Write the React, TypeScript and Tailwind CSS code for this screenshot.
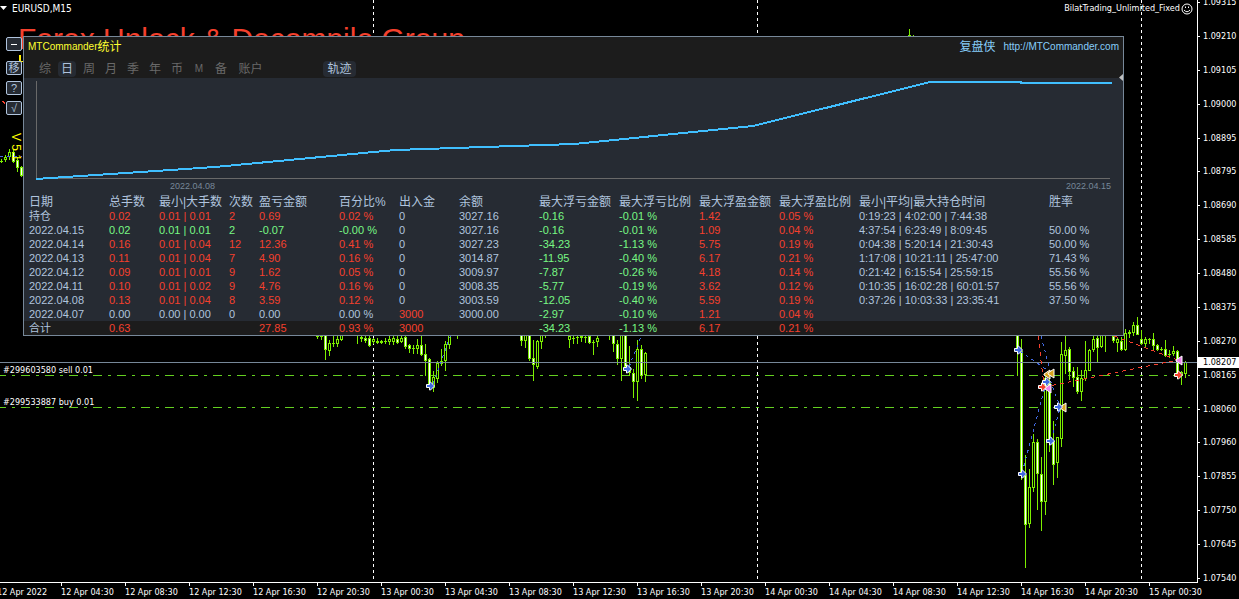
import React, { useState } from 'react';

type Vela = [x: number, high: number, low: number, top: number, bottom: number, dir: 'u' | 'd'];
type Tone = 'red' | 'green' | 'plain';

interface StatRow {
    date: string;
    tone: Tone;
    lots: string;
    range: string;
    count: string;
    profit: string;
    percent: string;
    deposit: string;
    balance: string;
    lossAmount: string;
    lossRatio: string;
    gainAmount: string;
    gainRatio: string;
    duration: string;
    winRate: string;
}

const toneClass: Record<Tone, string> = {
    red: 'text-[#f5402d]',
    green: 'text-[#78f884]',
    plain: 'text-[#b0c4de]',
};

const candles: Vela[] = [
    [1, 159, 163, 161, 162, 'u'], [5, 155, 162, 157, 160, 'u'], [9, 149, 160, 152, 157, 'u'],
    [13, 150, 163, 152, 162, 'd'], [17, 157, 172, 160, 168, 'd'], [21, 166, 177, 167, 176, 'd'],
    [317, 336, 339, 336, 337, 'u'], [321, 336, 340, 336, 337, 'u'], [325, 336, 360, 330, 350, 'd'],
    [329, 340, 356, 343, 351, 'u'], [333, 336, 347, 343, 344, 'u'], [337, 336, 347, 339, 344, 'u'],
    [341, 336, 341, 330, 340, 'u'], [357, 336, 344, 335, 336, 'u'], [361, 336, 342, 337, 339, 'u'],
    [365, 336, 343, 338, 341, 'd'], [369, 336, 347, 338, 346, 'd'], [373, 338, 344, 339, 342, 'u'],
    [377, 338, 344, 341, 343, 'u'], [381, 340, 344, 341, 343, 'u'], [385, 338, 344, 341, 342, 'u'],
    [389, 336, 345, 339, 342, 'u'], [393, 336, 345, 338, 342, 'u'], [397, 336, 344, 339, 343, 'd'],
    [401, 336, 343, 338, 342, 'u'], [405, 336, 349, 337, 347, 'd'], [409, 344, 353, 345, 349, 'd'],
    [413, 345, 354, 348, 349, 'u'], [417, 339, 354, 345, 349, 'u'], [421, 336, 356, 345, 355, 'd'],
    [425, 344, 376, 354, 361, 'd'], [429, 358, 388, 359, 386, 'd'], [433, 371, 392, 377, 388, 'u'],
    [437, 361, 383, 363, 379, 'u'], [441, 349, 366, 361, 364, 'u'], [445, 341, 371, 344, 361, 'u'],
    [449, 336, 349, 330, 345, 'u'], [457, 336, 339, 335, 336, 'u'], [521, 336, 346, 330, 341, 'd'],
    [525, 336, 348, 330, 341, 'u'], [529, 336, 361, 330, 359, 'd'], [533, 340, 381, 358, 365, 'd'],
    [537, 340, 369, 341, 367, 'u'], [541, 336, 349, 330, 342, 'u'], [545, 335, 338, 335, 336, 'u'],
    [569, 336, 348, 336, 340, 'u'], [573, 336, 344, 338, 339, 'u'], [577, 336, 344, 337, 338, 'u'],
    [581, 336, 342, 336, 338, 'u'], [585, 336, 343, 337, 338, 'u'], [589, 336, 344, 336, 343, 'd'],
    [593, 340, 355, 342, 343, 'u'], [597, 336, 347, 338, 342, 'u'], [609, 336, 340, 335, 336, 'u'],
    [613, 336, 352, 330, 344, 'd'], [617, 340, 365, 344, 359, 'd'], [621, 336, 381, 330, 359, 'u'],
    [625, 336, 371, 330, 367, 'd'], [629, 346, 376, 367, 373, 'd'], [633, 369, 398, 373, 382, 'd'],
    [637, 340, 401, 349, 382, 'u'], [641, 345, 379, 349, 376, 'd'], [645, 352, 382, 353, 375, 'u'],
    [909, 29, 36, 35, 36, 'u'], [913, 35, 38, 36, 37, 'u'],
    [1017, 335, 376, 330, 351, 'd'], [1021, 339, 480, 351, 475, 'd'], [1025, 455, 568, 475, 525, 'd'],
    [1029, 469, 528, 487, 524, 'u'], [1033, 434, 492, 442, 488, 'u'], [1037, 439, 510, 442, 474, 'd'],
    [1041, 457, 531, 474, 502, 'd'], [1045, 373, 515, 378, 502, 'u'], [1049, 375, 452, 383, 442, 'd'],
    [1053, 421, 485, 441, 465, 'd'], [1057, 437, 478, 437, 463, 'u'], [1061, 342, 447, 354, 439, 'u'],
    [1065, 335, 374, 350, 356, 'u'], [1069, 347, 380, 349, 372, 'd'], [1073, 367, 387, 371, 378, 'd'],
    [1077, 367, 394, 377, 392, 'd'], [1081, 370, 401, 378, 392, 'u'], [1085, 341, 381, 370, 379, 'u'],
    [1089, 349, 371, 350, 371, 'u'], [1093, 335, 352, 339, 350, 'u'], [1097, 335, 362, 338, 348, 'd'],
    [1101, 335, 348, 330, 347, 'u'], [1105, 335, 352, 334, 336, 'u'], [1113, 335, 343, 336, 341, 'd'],
    [1117, 337, 352, 339, 343, 'u'], [1121, 337, 351, 341, 350, 'd'], [1125, 329, 351, 333, 350, 'u'],
    [1129, 330, 338, 332, 334, 'u'], [1133, 322, 336, 325, 333, 'u'], [1137, 317, 335, 325, 335, 'd'],
    [1141, 330, 345, 339, 344, 'd'], [1145, 337, 348, 339, 344, 'u'], [1149, 338, 344, 339, 340, 'u'],
    [1153, 333, 350, 339, 346, 'd'], [1157, 344, 351, 345, 350, 'd'], [1161, 347, 351, 349, 350, 'u'],
    [1165, 340, 357, 349, 356, 'd'], [1169, 350, 358, 354, 355, 'u'], [1173, 346, 356, 351, 354, 'u'],
    [1177, 350, 376, 351, 374, 'd'], [1181, 371, 385, 372, 376, 'u'], [1185, 361, 378, 362, 374, 'u'],
];

const blueTrades: [number, number, number, number][] = [
    [433, 384, 451, 334],
    [629, 367, 642, 334],
    [1020, 351, 1047, 370],
    [1041, 336, 1050, 370],
    [1022, 473, 1046, 383],
    [1048, 374, 1059, 404],
    [1051, 440, 1060, 408],
    [0, 156, 22, 157],
];

const redTrades: [number, number, number, number][] = [
    [1038, 336, 1044, 385],
    [1044, 387, 1178, 360],
    [1114, 336, 1178, 360],
    [2, 101, 6, 104],
];

const priceLevels = [
    '1.09315', '1.09210', '1.09105', '1.09000', '1.08895', '1.08795', '1.08690', '1.08585', '1.08480',
    '1.08375', '1.08270', '1.08165', '1.08060', '1.07960', '1.07855', '1.07750', '1.07645', '1.07540',
];

const timeLabels = [
    '12 Apr 2022', '12 Apr 04:30', '12 Apr 08:30', '12 Apr 12:30', '12 Apr 16:30', '12 Apr 20:30',
    '13 Apr 00:30', '13 Apr 04:30', '13 Apr 08:30', '13 Apr 12:30', '13 Apr 16:30', '13 Apr 20:30',
    '14 Apr 00:30', '14 Apr 04:30', '14 Apr 08:30', '14 Apr 12:30', '14 Apr 16:30', '14 Apr 20:30',
    '15 Apr 00:30',
];

const tabs = ['综', '日', '周', '月', '季', '年', '币', 'M', '备'];

const headers = [
    '日期', '总手数', '最小|大手数', '次数', '盈亏金额', '百分比%', '出入金', '余额', '最大浮亏金额',
    '最大浮亏比例', '最大浮盈金额', '最大浮盈比例', '最小|平均|最大持仓时间', '胜率',
];

const rows: StatRow[] = [
    { date: '持仓', tone: 'red', lots: '0.02', range: '0.01 | 0.01', count: '2', profit: '0.69', percent: '0.02 %', deposit: '0', balance: '3027.16', lossAmount: '-0.16', lossRatio: '-0.01 %', gainAmount: '1.42', gainRatio: '0.05 %', duration: '0:19:23 | 4:02:00 | 7:44:38', winRate: '' },
    { date: '2022.04.15', tone: 'green', lots: '0.02', range: '0.01 | 0.01', count: '2', profit: '-0.07', percent: '-0.00 %', deposit: '0', balance: '3027.16', lossAmount: '-0.16', lossRatio: '-0.01 %', gainAmount: '1.09', gainRatio: '0.04 %', duration: '4:37:54 | 6:23:49 | 8:09:45', winRate: '50.00 %' },
    { date: '2022.04.14', tone: 'red', lots: '0.16', range: '0.01 | 0.04', count: '12', profit: '12.36', percent: '0.41 %', deposit: '0', balance: '3027.23', lossAmount: '-34.23', lossRatio: '-1.13 %', gainAmount: '5.75', gainRatio: '0.19 %', duration: '0:04:38 | 5:20:14 | 21:30:43', winRate: '50.00 %' },
    { date: '2022.04.13', tone: 'red', lots: '0.11', range: '0.01 | 0.04', count: '7', profit: '4.90', percent: '0.16 %', deposit: '0', balance: '3014.87', lossAmount: '-11.95', lossRatio: '-0.40 %', gainAmount: '6.17', gainRatio: '0.21 %', duration: '1:17:08 | 10:21:11 | 25:47:00', winRate: '71.43 %' },
    { date: '2022.04.12', tone: 'red', lots: '0.09', range: '0.01 | 0.01', count: '9', profit: '1.62', percent: '0.05 %', deposit: '0', balance: '3009.97', lossAmount: '-7.87', lossRatio: '-0.26 %', gainAmount: '4.18', gainRatio: '0.14 %', duration: '0:21:42 | 6:15:54 | 25:59:15', winRate: '55.56 %' },
    { date: '2022.04.11', tone: 'red', lots: '0.10', range: '0.01 | 0.02', count: '9', profit: '4.76', percent: '0.16 %', deposit: '0', balance: '3008.35', lossAmount: '-5.77', lossRatio: '-0.19 %', gainAmount: '3.62', gainRatio: '0.12 %', duration: '0:10:35 | 16:02:28 | 60:01:57', winRate: '55.56 %' },
    { date: '2022.04.08', tone: 'red', lots: '0.13', range: '0.01 | 0.04', count: '8', profit: '3.59', percent: '0.12 %', deposit: '0', balance: '3003.59', lossAmount: '-12.05', lossRatio: '-0.40 %', gainAmount: '5.59', gainRatio: '0.19 %', duration: '0:37:26 | 10:03:33 | 23:35:41', winRate: '37.50 %' },
    { date: '2022.04.07', tone: 'plain', lots: '0.00', range: '0.00 | 0.00', count: '0', profit: '0.00', percent: '0.00 %', deposit: '3000', balance: '3000.00', lossAmount: '-2.97', lossRatio: '-0.10 %', gainAmount: '1.21', gainRatio: '0.04 %', duration: '', winRate: '' },
];

const total: StatRow = { date: '合计', tone: 'red', lots: '0.63', range: '', count: '', profit: '27.85', percent: '0.93 %', deposit: '3000', balance: '', lossAmount: '-34.23', lossRatio: '-1.13 %', gainAmount: '6.17', gainRatio: '0.21 %', duration: '', winRate: '' };

const Candle: React.FC<{ data: Vela }> = ({ data: [x, high, low, top, bottom, dir] }) => (
    <g>
        <rect x={x} y={high} width={1} height={low - high} fill="#7cee00" />
        <rect x={x - 1} y={top} width={3} height={bottom - top} fill="#7cee00" />
        {bottom - top > 2 && (
            <rect x={x} y={top + 1} width={1} height={bottom - top - 2} fill={dir === 'd' ? '#ffffff' : '#000000'} />
        )}
    </g>
);

const ArrowMark: React.FC<{ x: number; y: number; color: string }> = ({ x, y, color }) => (
    <path
        d={`M${x - 3.5} ${y - 1.5}h3v-2.500h1l4 4l-4 4h-1v-2.500h-3z`}
        fill={color}
        stroke="#ffffff"
        strokeWidth={1}
    />
);

const ExitMark: React.FC<{ x: number; y: number; color: string }> = ({ x, y, color }) => (
    <path d={`M${x - 3} ${y}l6 -4v9l-6 -4z`} fill={color} stroke="#ffffff" strokeWidth={1} />
);

const PriceChart: React.FC = () => (
    <svg className="block h-full w-full" aria-hidden="true">
        <g shapeRendering="crispEdges">
            {[373, 757, 1141].map(x => (
                <line key={x} x1={x + 0.5} x2={x + 0.5} y1={0} y2="100%" stroke="#ffffff" strokeDasharray="3 3" />
            ))}
            {[375, 407].map(y => (
                <line key={y} x1={-3} x2="99.4%" y1={y + 0.5} y2={y + 0.5} stroke="#64d020" strokeDasharray="9 6 3 6" />
            ))}
            {candles.map(c => <Candle key={c[0]} data={c} />)}
            <line x1={0} x2="100%" y1={362.5} y2={362.5} stroke="#778899" />
            {blueTrades.map(([x1, y1, x2, y2], i) => (
                <line key={i} x1={x1} y1={y1} x2={x2} y2={y2} stroke="#4169e1" strokeDasharray="3 4" />
            ))}
            {redTrades.map(([x1, y1, x2, y2], i) => (
                <line key={i} x1={x1} y1={y1} x2={x2} y2={y2} stroke="#f5402d" strokeDasharray="4 4" />
            ))}
        </g>

        <ArrowMark x={430} y={386} color="#4169e1" />
        <ArrowMark x={627} y={369} color="#4169e1" />
        <ArrowMark x={1018} y={350} color="#4169e1" />
        <ExitMark x={1047} y={374} color="#daa520" />
        <ExitMark x={1051} y={373} color="#daa520" />
        <ExitMark x={1048} y={388} color="#ee82ee" />
        <ArrowMark x={1042} y={387} color="#f5402d" />
        <ArrowMark x={1046} y={382} color="#4169e1" />
        <ExitMark x={1063} y={407} color="#daa520" />
        <ArrowMark x={1058} y={407} color="#4169e1" />
        <ArrowMark x={1050} y={441} color="#4169e1" />
        <ArrowMark x={1022} y={474} color="#4169e1" />
        <ExitMark x={1179} y={360} color="#ee82ee" />
        <ArrowMark x={1178} y={375} color="#f5402d" />

        <g fill="#ffffff" className="font-['DejaVu_Sans_Condensed','DejaVu_Sans',sans-serif] text-[9px]">
            <text x={3} y={373}>#299603580 sell 0.01</text>
            <text x={3} y={405}>#299533887 buy 0.01</text>
        </g>
        <text x={18} y={49} fill="#f5402d" className="font-['Liberation_Sans',Arial,sans-serif] text-[30px]">
            Forex Unlock &amp; Decompile Group
        </text>
        <path d="M19 55h2v6h2v1h-4z" fill="#ffee00" />
        <text transform="translate(12 133) rotate(90)" fill="#ffff00" className="font-['Liberation_Sans',Arial,sans-serif] text-[12px]">
            V 5.1
        </text>
    </svg>
);

const EquityCurve: React.FC = () => (
    <svg className="block h-[103px] w-full" viewBox="0 0 1099 103" preserveAspectRatio="none" shapeRendering="crispEdges" role="img" aria-label="2022.04.08 - 2022.04.15">
        <path d="M12.5 3V100.5H1086" fill="none" stroke="#696969" />
        <polyline
            points="12,101 191,89 371,72 550,66 729,48 906,4 997,4 997,5 1088,5"
            fill="none"
            stroke="#40bfff"
            strokeWidth={2}
        />
    </svg>
);

const StatCells: React.FC<{ row: StatRow }> = ({ row }) => (
    <>
        <th scope="row" className="pl-[5px] text-left font-normal">{row.date}</th>
        <td className={toneClass[row.tone]}>{row.lots}</td>
        <td className={toneClass[row.tone]}>{row.range}</td>
        <td className={toneClass[row.tone]}>{row.count}</td>
        <td className={toneClass[row.tone]}>{row.profit}</td>
        <td className={toneClass[row.tone]}>{row.percent}</td>
        <td className={row.deposit === '3000' ? toneClass.red : ''}>{row.deposit}</td>
        <td>{row.balance}</td>
        <td className={toneClass.green}>{row.lossAmount}</td>
        <td className={toneClass.green}>{row.lossRatio}</td>
        <td className={toneClass.red}>{row.gainAmount}</td>
        <td className={toneClass.red}>{row.gainRatio}</td>
        <td>{row.duration}</td>
        <td>{row.winRate}</td>
    </>
);

const StatsPanel: React.FC = () => {
    const [activeTab, setActiveTab] = useState('日');
    const [showTrack, setShowTrack] = useState(true);

    return (
        <section className="absolute top-9 right-[115px] left-[23px] border border-[#778899] bg-[#262b33] font-['Liberation_Sans','Noto_Sans_CJK_SC',sans-serif] text-[11px] text-[#b0c4de]">
            <header className="h-[41px] bg-[#1c1c1c]">
                <div className="flex h-5 items-center justify-between pr-1 pl-1 text-[10px] leading-5">
                    <h1 className="flex items-center text-[#ffff30]">
                        <span>MTCommander</span>
                        <span className="text-xs leading-5">统计</span>
                    </h1>
                    <a href="http://MTCommander.com" className="flex items-center gap-2 text-[#87cefa]">
                        <span className="text-xs leading-5">复盘侠</span>
                        <span>http://MTCommander.com</span>
                    </a>
                </div>
                <nav className="flex items-center pt-1 pl-3">
                    <div className="flex gap-1">
                        {tabs.map(tab => (
                            <button
                                key={tab}
                                type="button"
                                onClick={() => setActiveTab(tab)}
                                className={`h-4 w-[18px] rounded-sm text-center leading-4 ${tab === 'M' ? 'text-[10px]' : 'text-xs'} ${activeTab === tab ? 'bg-[#262b33] text-[#b0c4de]' : 'text-[#696969]'}`}
                            >
                                {tab}
                            </button>
                        ))}
                        <button
                            type="button"
                            onClick={() => setActiveTab('账户')}
                            className={`h-4 w-[33px] rounded-sm text-center text-xs leading-4 ${activeTab === '账户' ? 'bg-[#262b33] text-[#b0c4de]' : 'text-[#696969]'}`}
                        >
                            账户
                        </button>
                    </div>
                    <button
                        type="button"
                        aria-pressed={showTrack}
                        onClick={() => setShowTrack(!showTrack)}
                        className="ml-14 h-4 w-[33px] rounded-sm bg-[#262b33] text-center text-xs leading-4"
                    >
                        轨迹
                    </button>
                </nav>
            </header>

            <EquityCurve />
            <div className="flex h-[14px] justify-between pr-3 pl-[146px] text-[9px] leading-[10px] text-[#778899]">
                <span>2022.04.08</span>
                <span>2022.04.15</span>
            </div>

            <table className="w-full table-fixed border-collapse text-left leading-[14px] whitespace-nowrap">
                <colgroup>
                    <col className="w-[85px]" />
                    <col className="w-[50px]" />
                    <col className="w-[70px]" />
                    <col className="w-[30px]" />
                    <col className="w-[80px]" />
                    <col className="w-[60px]" />
                    <col className="w-[60px]" />
                    <col className="w-[80px]" />
                    <col className="w-[80px]" />
                    <col className="w-[80px]" />
                    <col className="w-[80px]" />
                    <col className="w-[80px]" />
                    <col className="w-[190px]" />
                    <col />
                </colgroup>
                <thead className="text-xs leading-[14px]">
                    <tr>
                        {headers.map((h, i) => (
                            <th key={h} scope="col" className={`font-normal ${i === 0 ? 'pl-[5px]' : ''}`}>{h}</th>
                        ))}
                    </tr>
                </thead>
                <tbody>
                    {rows.map(row => <tr key={row.date}><StatCells row={row} /></tr>)}
                </tbody>
                <tfoot className="bg-[#1c1c1c]">
                    <tr><StatCells row={total} /></tr>
                </tfoot>
            </table>

            <svg className="absolute top-[37px] right-0 h-[7px] w-1" viewBox="0 0 4 7" aria-hidden="true">
                <path d="M4 0V7L0 3.5Z" fill="#c0c0c0" />
            </svg>
        </section>
    );
};

const SideButtons: React.FC = () => {
    const base = "flex h-[14px] w-4 items-center justify-center rounded-[2px] border border-[#b0c4de] bg-[#262b33] leading-3";
    return (
        <div className="absolute top-[37px] left-[6px] flex flex-col gap-[6px] font-['Liberation_Sans','Noto_Sans_CJK_SC',sans-serif] text-[11px] text-[#b0c4de]">
            <button type="button" aria-label="−" className={`mb-1 ${base}`}>
                <span className="h-px w-[6px] bg-white"></span>
            </button>
            <button type="button" className={base}>移</button>
            <button type="button" className={base}>?</button>
            <button type="button" className={base}>√</button>
        </div>
    );
};

const App: React.FC = () => (
    <main className="relative flex h-screen overflow-hidden bg-black font-['DejaVu_Sans_Condensed','DejaVu_Sans',sans-serif] text-[9px] text-white">
        <div className="flex min-w-0 flex-1 flex-col">
            <div className="relative min-h-0 flex-1">
                <PriceChart />
                <div className="absolute inset-x-0 top-0 flex h-4 items-center justify-between pr-1">
                    <div className="flex items-center gap-[5px] text-[10px]">
                        <svg width="7" height="4" viewBox="0 0 7 4" aria-hidden="true"><path d="M0 0H7L3.5 4Z" fill="#fff" /></svg>
                        <span>EURUSD,M15</span>
                    </div>
                    <div className="flex items-center gap-px pt-[2px]">
                        <span>BilatTrading_Unlimited_Fixed</span>
                        <svg width="12" height="12" viewBox="0 0 12 12" fill="none" stroke="#fff" aria-hidden="true">
                            <circle cx="6" cy="6" r="5" />
                            <path d="M3 7Q6 10.500 9 7M4.500 3.500V5M7.500 3.500V5" />
                        </svg>
                    </div>
                </div>
            </div>
            <div className="flex h-[17px] border-t border-white">
                <div className="-ml-[3px] flex">
                    {timeLabels.map((label, i) => (
                        <div key={label} className="w-16 shrink-0 whitespace-nowrap">
                            <span className={`block h-[3px] w-px ${i === 0 ? '' : 'bg-white'}`}></span>
                            <span className="block leading-3">{label}</span>
                        </div>
                    ))}
                </div>
            </div>
        </div>
        <aside className="relative mb-4 flex w-[42px] flex-col justify-between border-l border-white pb-[2px]">
            {priceLevels.map(price => (
                <div key={price} className="flex h-[5px] items-center gap-[3px] leading-[5px]">
                    <span className="h-px w-[2px] bg-white"></span>
                    <span>{price}</span>
                </div>
            ))}
            <span className="absolute top-[357px] right-0 left-0 h-[11px] bg-white pl-[5px] leading-[11px] text-black">1.08207</span>
        </aside>
        <SideButtons />
        <StatsPanel />
    </main>
);

export default App;
